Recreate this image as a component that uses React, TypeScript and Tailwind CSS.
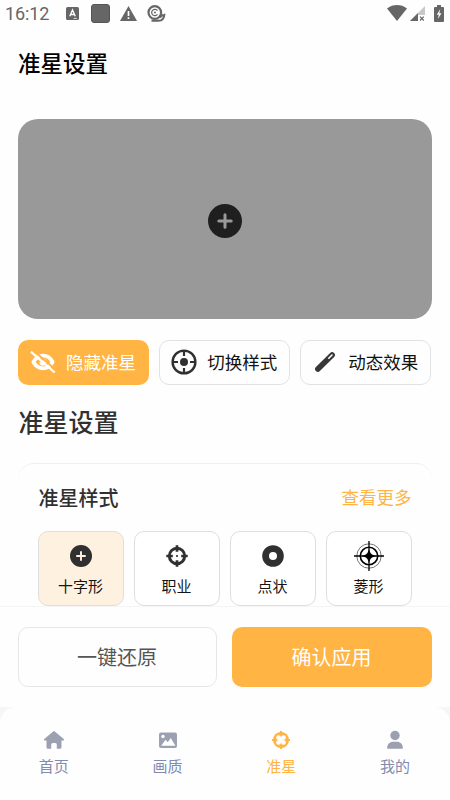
import React, { useState } from "react";

type IconProps = { className?: string };

const PlusDot: React.FC<IconProps> = ({ className }) => (
  <svg viewBox="0 0 34 34" className={className}>
    <circle cx="17" cy="17" r="17" fill="currentColor" />
    <path d="M17 10.8v12.4M10.8 17h12.4" stroke="var(--plus)" strokeWidth="3" strokeLinecap="round" />
  </svg>
);

const ProIcon: React.FC<IconProps> = ({ className }) => (
  <svg viewBox="0 0 22 22" className={className} fill="none" stroke="currentColor">
    <circle cx="11" cy="11" r="7.700" strokeWidth="2.900" />
    <path d="M11 .3v6.500M11 15.200v6.500M.3 11h6.500M15.200 11h6.500" strokeWidth="2.700" />
    <circle cx="11" cy="11" r="1.100" fill="currentColor" stroke="none" />
  </svg>
);

const DotIcon: React.FC<IconProps> = ({ className }) => (
  <svg viewBox="0 0 22 22" className={className}>
    <circle cx="11" cy="11" r="7.4" fill="none" stroke="currentColor" strokeWidth="6.8" />
  </svg>
);

const DiamondIcon: React.FC<IconProps> = ({ className }) => (
  <svg viewBox="0 0 30 30" className={className} fill="none" stroke="currentColor">
    <circle cx="15" cy="15" r="12.2" strokeWidth="0.9" opacity="0.6" />
    <circle cx="15" cy="15" r="8.7" strokeWidth="1.6" />
    <path d="M15 0v30M0 15h30" strokeWidth="1.3" />
    <path d="M15 8c1.200 4.500 2.500 5.800 7 7-4.500 1.200-5.800 2.500-7 7-1.200-4.500-2.500-5.800-7-7 4.500-1.200 5.800-2.500 7-7z" fill="currentColor" stroke="none" />
  </svg>
);

const HiddenEye: React.FC<IconProps> = ({ className }) => (
  <svg viewBox="0 0 26 24" className={className} fill="none" stroke="currentColor">
    <path d="M3.400 12C6 7.500 9.500 5.700 13 5.700s7.200 2 9.600 6.300c-2.400 4.400-6.100 6.300-9.600 6.300S5.800 16.300 3.400 12z" strokeWidth="3.800" strokeLinejoin="round" />
    <path d="M13 8.500a3.600 3.600 0 1 1-3.600 3.600c1.700.8 4-1 3.600-3.600z" fill="currentColor" stroke="none" />
    <path d="M3.600 .8L26 20" stroke="#ffb444" strokeWidth="2" />
    <path d="M.8 1.700L24.700 22.500" strokeWidth="2.300" />
  </svg>
);

const SwitchIcon: React.FC<IconProps> = ({ className }) => (
  <svg viewBox="0 0 26 26" className={className} fill="none" stroke="currentColor">
    <circle cx="13" cy="13" r="11.400" strokeWidth="2.400" />
    <circle cx="13" cy="13" r="4" fill="currentColor" stroke="none" />
    <path d="M13 1v6M13 19v6M1 13h6M19 13h6" strokeWidth="2.200" />
  </svg>
);

const WandIcon: React.FC<IconProps> = ({ className }) => (
  <svg viewBox="0 0 22 22" className={className} fill="none" strokeLinecap="round">
    <path d="M3.900 18.100L18.100 3.900" stroke="currentColor" strokeWidth="5.600" />
    <path d="M14.800 7.200l3.200-3.200" stroke="#fff" strokeWidth="1.600" />
  </svg>
);

const HomeIcon: React.FC<IconProps> = ({ className }) => (
  <svg viewBox="0 0 20 20" className={className} fill="currentColor">
    <path d="M9.200 1.400a1.200 1.200 0 0 1 1.600 0l8.900 7.700c.6.600.3 1.400-.5 1.400h-1.700v6.800a1.500 1.500 0 0 1-1.500 1.500h-3.200v-4.400a1.500 1.500 0 0 0-1.500-1.500H8.700a1.500 1.500 0 0 0-1.500 1.500v4.400H4a1.500 1.500 0 0 1-1.500-1.500v-6.800H.8c-.8 0-1.100-.8-.5-1.400z" />
  </svg>
);

const PictureIcon: React.FC<IconProps> = ({ className }) => (
  <svg viewBox="0 0 20 20" className={className}>
    <rect x="1" y="2.500" width="18" height="15.500" rx="2" fill="currentColor" />
    <circle cx="5" cy="6.500" r="1.700" fill="#fff" />
    <path d="M3.200 15.800l4.300-6 2.300 2.500 3-4.300 4.600 7.800z" fill="#fff" />
  </svg>
);

const AimIcon: React.FC<IconProps> = ({ className }) => (
  <svg viewBox="0 0 20 20" className={className}>
    <circle cx="10" cy="10" r="8" fill="currentColor" />
    <path d="M10 1v18M1 10h18" stroke="currentColor" strokeWidth="2" />
    <g fill="#fff">
      <circle cx="7.600" cy="7.600" r="2.400" />
      <circle cx="12.400" cy="7.600" r="2.400" />
      <circle cx="7.600" cy="12.400" r="2.400" />
      <circle cx="12.400" cy="12.400" r="2.400" />
      <path d="M8 8h4v4H8z" />
    </g>
  </svg>
);

const UserIcon: React.FC<IconProps> = ({ className }) => (
  <svg viewBox="0 0 20 20" className={className} fill="currentColor">
    <circle cx="10" cy="5.500" r="4.700" />
    <path d="M2.200 18.700v-1.200c0-3.400 2.600-5.700 6-5.700h3.600c3.400 0 6 2.300 6 5.700v1.200z" />
  </svg>
);

const StatusBar: React.FC = () => (
  <div className="flex h-7 items-center pl-[5px] pr-[6px] font-[Roboto,sans-serif] text-[#666]">
    <span className="w-[61px] text-[18px] leading-7 tracking-[-0.1px]">16:12</span>
    <svg viewBox="0 0 12 12" className="-mt-px h-[13px] w-[13px]">
      <rect width="12" height="12" rx="1.500" fill="currentColor" />
      <path d="M3.500 8.500L6 2.800l2.500 5.700M4.500 6.900h3" fill="none" stroke="#fff" strokeWidth="1.300" />
      <path d="M7 10.500h3" stroke="#fff" strokeWidth=".7" />
    </svg>
    <span className="-mt-[2px] ml-3 h-[19px] w-[19px] rounded-[3px] border border-[#555] bg-[#666]" />
    <svg viewBox="0 0 17 15" className="-mt-[2px] ml-[10px] h-[15px] w-[17px]">
      <path d="M8.500 0L17 15H0z" fill="currentColor" />
      <path d="M8.500 5v5M8.500 11.300v1.800" stroke="#fff" strokeWidth="1.700" />
    </svg>
    <svg viewBox="0 0 19 17" className="-mt-px ml-[10px] h-[17px] w-[19px]" fill="none" stroke="currentColor">
      <circle cx="7.800" cy="7.500" r="6.300" strokeWidth="2.200" />
      <path d="M10.500 5.700a3.200 3.200 0 1 0 0 3.600" strokeWidth="1.200" />
      <circle cx="8" cy="7.500" r="1" fill="currentColor" stroke="none" />
      <path d="M4.500 15.700h7c3.500 0 5.800-2.500 6-7M13 12.500l3-3" strokeWidth="2" />
    </svg>
    <svg viewBox="0 0 20 16" className="-mt-[2px] ml-auto h-4 w-5">
      <path d="M0 3.400C6-1.100 14-1.100 20 3.400L10 16z" fill="currentColor" />
    </svg>
    <svg viewBox="0 0 15 15" className="-mt-px ml-[3px] h-[15px] w-[15px]">
      <path d="M15 0v15H0z" fill="#c8c8c8" />
      <path d="M8 7v8H0z" fill="currentColor" />
      <path d="M8 9h7v6H8z" fill="#fff" />
      <path d="M10 10.700l3.800 3.800M13.800 10.700L10 14.500" stroke="currentColor" strokeWidth="1.200" />
    </svg>
    <svg viewBox="0 0 10 17" className="-mt-[2px] ml-[9px] h-[17px] w-[10px]">
      <path d="M3 0h4v2h2a1 1 0 0 1 1 1v13a1 1 0 0 1-1 1H1a1 1 0 0 1-1-1V3a1 1 0 0 1 1-1h2z" fill="currentColor" />
      <path d="M6.300 4L2.800 9.800h2L3.900 14l3.600-5.700H5.300z" fill="#fff" />
    </svg>
  </div>
);

const styles = [
  { name: "十字形", icon: <PlusDot className="h-[22px] w-[22px] [--plus:#fff1df]" /> },
  { name: "职业", icon: <ProIcon className="h-[22px] w-[22px]" /> },
  { name: "点状", icon: <DotIcon className="h-[22px] w-[22px]" /> },
  { name: "菱形", icon: <DiamondIcon className="h-[30px] w-[30px] text-black" /> },
];

const tabs = [
  { name: "首页", Icon: HomeIcon },
  { name: "画质", Icon: PictureIcon },
  { name: "准星", Icon: AimIcon },
  { name: "我的", Icon: UserIcon },
];

const App: React.FC = () => {
  const [selected, setSelected] = useState("十字形");
  const [tab, setTab] = useState("准星");

  return (
    <div className="flex h-[800px] w-[450px] flex-col overflow-hidden bg-[#fefefe] font-['Noto_Sans_CJK_SC',sans-serif] text-[#303030]">
      <StatusBar />

      <header className="flex h-[91px] items-center px-[18px] pb-[24px]">
        <h1 className="text-[22.5px] font-medium leading-8 text-black">准星设置</h1>
      </header>

      {/* 内容区域 */}
      <main className="flex h-[487px] shrink-0 flex-col overflow-hidden pl-[17.5px] pr-[18.5px]">
        <div className="flex h-[200px] shrink-0 items-center justify-center rounded-[20px] bg-[#999]">
          <PlusDot className="mt-[3px] h-[34px] w-[34px] text-[#1f1f1f] [--plus:#999]" />
        </div>

        <div className="mt-[20.5px] grid h-[45px] shrink-0 grid-cols-3 gap-[10px] text-[17.5px] text-[#111]">
          <button className="flex items-center rounded-[10px] bg-[#ffb444] pl-3 text-white">
            <HiddenEye className="mr-[10.5px] h-6 w-[26px]" />
            隐藏准星
          </button>
          <button className="flex items-center rounded-[10px] border border-[#e2e2e2] pl-[11px]">
            <SwitchIcon className="mr-[10.5px] h-[26px] w-[26px] text-[#303030]" />
            切换样式
          </button>
          <button className="flex items-center rounded-[10px] border border-[#e2e2e2] pl-[13px]">
            <WandIcon className="mr-3 h-[22px] w-[22px] text-[#38383a]" />
            动态效果
          </button>
        </div>

        <h2 className="mt-[16.5px] pl-px text-[25px] font-medium leading-10">准星设置</h2>

        <section className="mt-[22px] grow rounded-t-[16px] border-t border-[#efefef] px-[20px]">
          <div className="flex h-[67px] items-center justify-between">
            <h3 className="pl-px text-[20px] font-medium">准星样式</h3>
            <button className="text-[17.5px] text-[#ffb444]">查看更多</button>
          </div>
          <div className="grid grid-cols-4 gap-[10px]">
            {styles.map((item) => (
              <button
                key={item.name}
                onClick={() => setSelected(item.name)}
                className={`flex h-[75px] flex-col items-center rounded-[10px] border border-[#dedede] pt-[8px] ${
                  selected === item.name ? "bg-[#fff1df]" : "bg-white"
                }`}
              >
                <span className="flex h-[31px] items-center">{item.icon}</span>
                <span className="mt-[5px] text-[15px] leading-5 text-[#151515]">{item.name}</span>
              </button>
            ))}
          </div>
        </section>
      </main>

      {/* 底部操作 */}
      <div className="flex h-[101px] shrink-0 gap-[15px] border-t border-[#f5f5f5] pl-[17.5px] pr-[18px] pt-5 text-[20px]">
        <button className="h-[60px] w-[199px] rounded-[10px] border border-[#e7e7e7] text-[#555]">一键还原</button>
        <button className="h-[60px] w-[200px] rounded-[10px] bg-[#ffb444] text-white">确认应用</button>
      </div>

      <div className="grow bg-[#f6f6f6]">
        <nav className="h-full rounded-t-[16px] bg-[#fefefe]">
          <div className="-ml-[3px] -mr-[2px] grid grid-cols-4 pt-[23px]">
            {tabs.map(({ name, Icon }) => (
              <button key={name} onClick={() => setTab(name)} className="flex flex-col items-center">
                <Icon className={`h-5 w-5 ${tab === name ? "text-[#ffb444]" : "text-[#9ba1b0]"}`} />
                <span
                  className={`mt-[6px] text-[15px] leading-5 ${
                    tab === name ? "text-[#ffb444]" : "text-[#808bb0]"
                  }`}
                >
                  {name}
                </span>
              </button>
            ))}
          </div>
        </nav>
      </div>
    </div>
  );
};

export default App;
